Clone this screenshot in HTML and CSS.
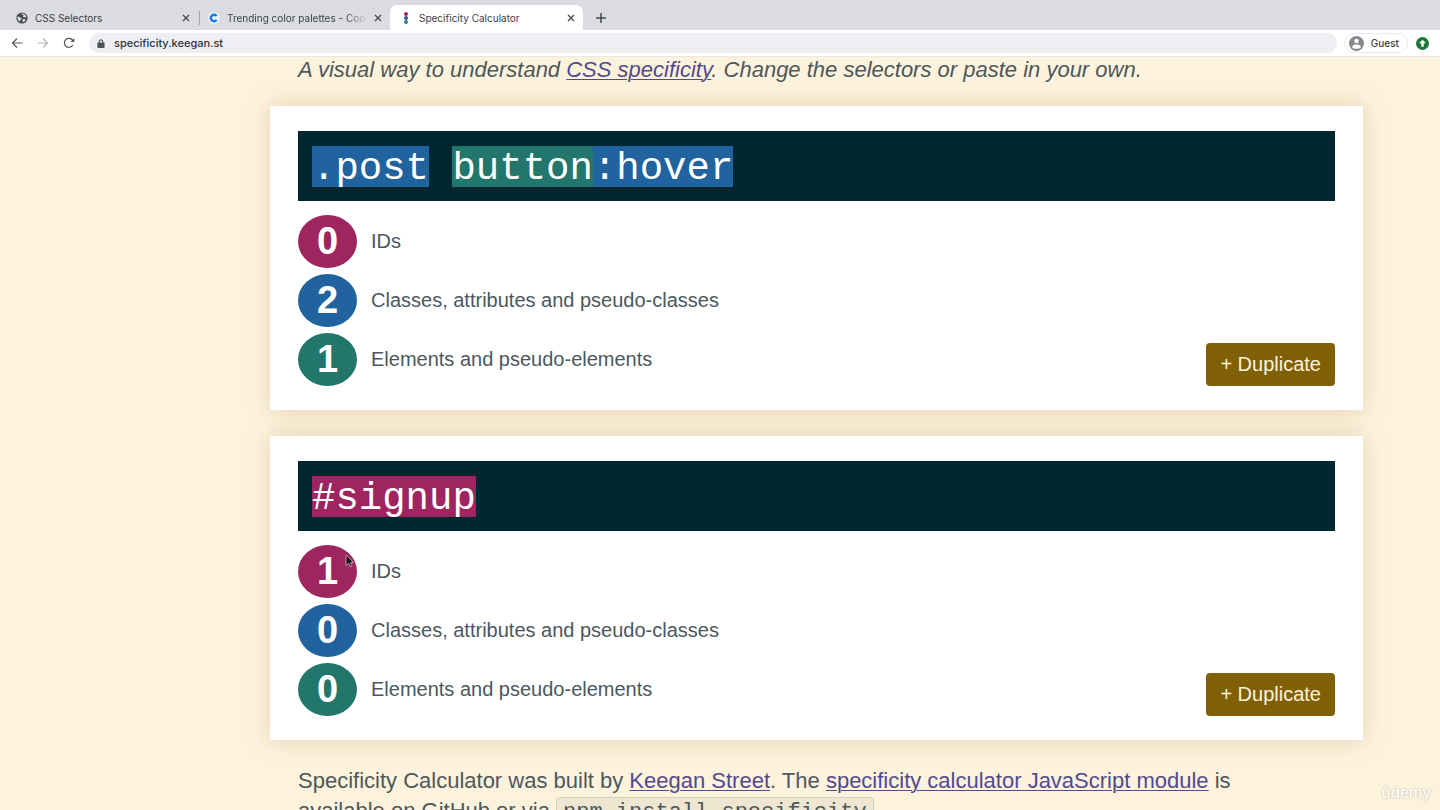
FILE: index.html
```html
<!DOCTYPE html>
<html lang="en">
<head>
<meta charset="utf-8">
<title>Specificity Calculator</title>
<link rel="stylesheet" href="styles.css">
</head>
<body class="browser">
<header class="chrome">
  <nav class="tabs" aria-label="Tabs">
    <div class="tab tab-first">
      <svg class="favicon" viewBox="0 0 12 12" aria-hidden="true"><circle cx="6" cy="6" r="5.6" fill="#46494d"/><path d="M1.6 4.6c1.6-.2 2.1 1.2 3.4 1.2 1 .2.8 1.300 0 1.500-.9.300-.3 1.900-1.300 2.300C2.200 8.700 1 6.700 1.600 4.600zM5.400 1.400c.4 1.300 1.400.9 2 1.700.5.900-.9 1.100-.4 1.900.7.900 2-.2 3.300.5C10.400 3.200 8.200 1.200 5.400 1.400zM6.800 7.200c1.200-.5 2.100-.1 2.900.6-.5 1.200-1.300 1.900-2.500 2.300-.9-.8-1-2-.4-2.900z" fill="#dadce1"/></svg>
      <span class="tab-title">CSS Selectors</span>
      <button class="close" aria-label="Close CSS Selectors"><svg viewBox="0 0 8 8"><path d="M1 1l6 6M7 1L1 7"/></svg></button>
    </div>
    <div class="tab tab-second">
      <svg class="favicon" viewBox="0 0 12 12" aria-hidden="true"><circle cx="6" cy="6" r="6" fill="#e8f5ff"/><path d="M8.600 7.900A3.200 3.200 0 1 1 8.600 4.100" fill="none" stroke="#1478ea" stroke-width="2.400"/></svg>
      <span class="tab-title faded">Trending color palettes - Coolors</span>
      <button class="close" aria-label="Close Trending color palettes"><svg viewBox="0 0 8 8"><path d="M1 1l6 6M7 1L1 7"/></svg></button>
    </div>
    <div class="tab tab-active">
      <svg class="favicon" viewBox="0 0 12 12" aria-hidden="true"><circle cx="6" cy="2" r="2" fill="#9e2560"/><circle cx="6" cy="6" r="2" fill="#39578f"/><circle cx="6" cy="10" r="2" fill="#238487"/></svg>
      <span class="tab-title">Specificity Calculator</span>
      <button class="close" aria-label="Close Specificity Calculator"><svg viewBox="0 0 8 8"><path d="M1 1l6 6M7 1L1 7"/></svg></button>
    </div>
    <button class="new-tab" aria-label="New tab"><svg viewBox="0 0 10 10"><path d="M5 0v10M0 5h10"/></svg></button>
  </nav>
  <div class="toolbar">
    <button class="tool" aria-label="Back"><svg viewBox="0 0 12 12"><path d="M11.500 6H1.500M6 1.500L1.500 6 6 10.500"/></svg></button>
    <button class="tool tool-off" aria-label="Forward"><svg viewBox="0 0 12 12"><path d="M.5 6h10M6 1.500L10.500 6 6 10.500"/></svg></button>
    <button class="tool" aria-label="Reload"><svg viewBox="0 0 12 12"><path d="M9.800 8A4.500 4.500 0 1 1 9.500 3.200L10.500 4.200"/><path d="M11.400 1v4h-4z" fill="#55585c" stroke="none"/></svg></button>
    <div class="address">
      <svg class="lock" viewBox="0 0 8 10" aria-hidden="true"><rect x="0" y="4" width="8" height="6" rx="1" fill="#505357"/><path d="M2 4.500V3a2 2 0 0 1 4 0v1.500" fill="none" stroke="#505357" stroke-width="1.200"/></svg>
      <input class="url" type="text" aria-label="Address" value="specificity.keegan.st">
    </div>
    <button class="guest"><svg viewBox="0 0 14 14" aria-hidden="true"><circle cx="7" cy="7" r="7" fill="#85888d"/><circle cx="7" cy="4.700" r="2.100" fill="#fff"/><path d="M2.800 10.200C3.400 8.500 5.200 8 7 8s3.600.5 4.200 2.200C10.200 11.500 8.700 12 7 12s-3.200-.5-4.200-1.800z" fill="#fff"/></svg>Guest</button>
    <button class="update" aria-label="Update"><svg viewBox="0 0 12 12"><circle cx="6" cy="6" r="6" fill="#1d7538"/><path d="M6 2.600l3.200 3.200H7.200v3.200H4.800V5.800H2.800z" fill="#fff"/></svg></button>
  </div>
</header>

<div class="viewport">
  <main class="page">
    <p class="intro">A visual way to understand <a href="#specificity">CSS specificity</a>. Change the selectors or paste in your own.</p>

    <section class="card">
      <code class="selector"><span class="part type-b">.post</span> <span class="part type-c">button</span><span class="part type-b">:hover</span></code>
      <div class="result">
        <ul class="scores">
          <li class="score"><span class="count type-a">0</span>IDs</li>
          <li class="score"><span class="count type-b">2</span>Classes, attributes and pseudo-classes</li>
          <li class="score"><span class="count type-c">1</span>Elements and pseudo-elements</li>
        </ul>
        <button class="duplicate">+ Duplicate</button>
      </div>
    </section>

    <section class="card">
      <code class="selector"><span class="part type-a">#signup</span></code>
      <div class="result">
        <ul class="scores">
          <li class="score"><span class="count type-a">1<svg class="pointer" viewBox="0 0 9 13" aria-hidden="true"><path d="M.8.800v9.800l2.300-2 1.500 3.400 1.800-.8-1.500-3.200h3z" fill="#15131a" stroke="#c9a5b8" stroke-width=".8"/></svg></span>IDs</li>
          <li class="score"><span class="count type-b">0</span>Classes, attributes and pseudo-classes</li>
          <li class="score"><span class="count type-c">0</span>Elements and pseudo-elements</li>
        </ul>
        <button class="duplicate">+ Duplicate</button>
      </div>
    </section>

    <p class="about">Specificity Calculator was built by <a href="#keegan">Keegan Street</a>. The <a href="#module">specificity calculator JavaScript module</a> is available on GitHub or via <code class="command">npm install specificity</code></p>
  </main>
  <span class="watermark">ûdemy</span>
</div>
</body>
</html>
```
FILE: styles.css
```css
* {
  box-sizing: border-box;
}

.browser {
  margin: 0;
  height: 100vh;
  display: flex;
  flex-direction: column;
  overflow: hidden;
  background: #fdf3dc;
  font-family: "Liberation Sans", Arial, sans-serif;
}

button {
  border: 0;
  padding: 0;
  background: none;
  font: inherit;
  color: inherit;
}

.chrome {
  flex: none;
  font-family: Inter, sans-serif;
  color: #3c4043;
}

.tabs {
  display: flex;
  height: 30px;
  padding-top: 5px;
  background: #dadce1;
}

.tab {
  display: flex;
  align-items: center;
  gap: 7px;
  font-size: 10px;
}

.tab-first {
  width: 199px;
  padding: 0 9px 0 16px;
}

.tab-second {
  width: 191px;
  padding: 0 8px 0 9px;
  background: linear-gradient(#a3a6aa, #a3a6aa) 0 6px / 1px 14px no-repeat;
}

.tab-active {
  width: 193px;
  padding: 0 8px 0 10px;
  border-radius: 7px 7px 0 0;
  background: #fff;
}

.favicon {
  flex: none;
  width: 12px;
  height: 12px;
}

.tab-title {
  flex: 1;
  overflow: hidden;
  white-space: nowrap;
}

.faded {
  mask-image: linear-gradient(90deg, #000 85%, transparent);
}

.close,
.new-tab {
  display: flex;
  align-items: center;
}

.close svg {
  width: 8px;
  height: 8px;
  stroke: #45484c;
  stroke-width: 1.3;
}

.new-tab {
  padding: 0 13px;
}

.new-tab svg {
  width: 10px;
  height: 10px;
  stroke: #45484c;
  stroke-width: 1.5;
}

.toolbar {
  display: flex;
  align-items: center;
  height: 27px;
  padding: 0 11px;
  background: #fff;
  border-bottom: 1px solid #ebe7e2;
}

.tool {
  display: flex;
  margin-right: 14px;
}

.tool svg {
  width: 12px;
  height: 12px;
  fill: none;
  stroke: #55585c;
  stroke-width: 1.2;
}

.tool-off svg {
  stroke: #b4b6b9;
}

.address {
  flex: 1;
  display: flex;
  align-items: center;
  gap: 9px;
  height: 20px;
  padding: 0 8px;
  border-radius: 10px;
  background: #eeeff2;
}

.lock {
  width: 8px;
  height: 9px;
}

.url {
  flex: 1;
  border: 0;
  padding: 0;
  background: none;
  font: 500 11px Inter, sans-serif;
  color: #303338;
}

.guest {
  display: flex;
  align-items: center;
  gap: 7px;
  height: 20px;
  margin: 0 8px 0 7px;
  padding: 0 8px 0 4px;
  border: 1px solid #e9eaed;
  border-radius: 10px;
  font-size: 10px;
  font-weight: 500;
}

.guest svg {
  width: 15px;
  height: 15px;
}

.update {
  display: flex;
}

.update svg {
  width: 13px;
  height: 13px;
}

.viewport {
  flex: 1;
  overflow: hidden;
}

.page {
  margin: 0 77px 0 270px;
  color: #4c585d;
}

.intro,
.about {
  margin: 0;
  padding: 0 28px;
  font-size: 22px;
}

.intro {
  padding-bottom: 23px;
  font-style: italic;
  line-height: 26px;
}

.about {
  padding-right: 56px;
  line-height: 30px;
}

.page a {
  color: #514b8d;
  text-decoration-thickness: 1px;
  text-underline-offset: 2px;
}

.card {
  margin-bottom: 26px;
  padding: 25px 28px 24px;
  background: #fff;
  box-shadow: 0 0 22px rgba(150, 110, 60, 0.26);
}

.selector {
  display: block;
  padding: 15px 14px 14px;
  background: #002730;
  color: #fff;
  font-family: "Liberation Mono", monospace;
  font-size: 39px;
  line-height: 35px;
}

.part {
  display: inline-block;
  padding-top: 6px;
}

.type-a {
  background: #9e2560;
}

.type-b {
  background: #20639e;
}

.type-c {
  background: #22766c;
}

.result {
  display: flex;
  justify-content: space-between;
  align-items: flex-end;
  padding-top: 14px;
}

.scores {
  display: grid;
  gap: 6px;
  margin: 0;
  padding: 0;
  list-style: none;
}

.score {
  display: flex;
  align-items: center;
  gap: 14px;
  font-size: 20px;
}

.count {
  position: relative;
  width: 59px;
  height: 53px;
  border-radius: 50%;
  color: #fff;
  font-size: 38px;
  font-weight: bold;
  line-height: 53px;
  text-align: center;
}

.pointer {
  position: absolute;
  top: 9px;
  right: 2px;
  width: 10px;
  height: 14px;
}

.duplicate {
  padding: 0 14px;
  border-radius: 4px;
  background: #806005;
  color: #fdf3dc;
  font-size: 20px;
  line-height: 43px;
}

.command {
  padding: 2px 6px;
  border: 1px solid #d5cfbd;
  border-radius: 4px;
  background: #eee6d0;
  font-family: "Liberation Mono", monospace;
  font-size: 22px;
}

.watermark {
  position: absolute;
  right: 9px;
  bottom: 7px;
  color: #fff;
  font: 600 15px/20px Inter, sans-serif;
  text-shadow: 0 0 2px #8f8778;
  opacity: 0.7;
}
```
